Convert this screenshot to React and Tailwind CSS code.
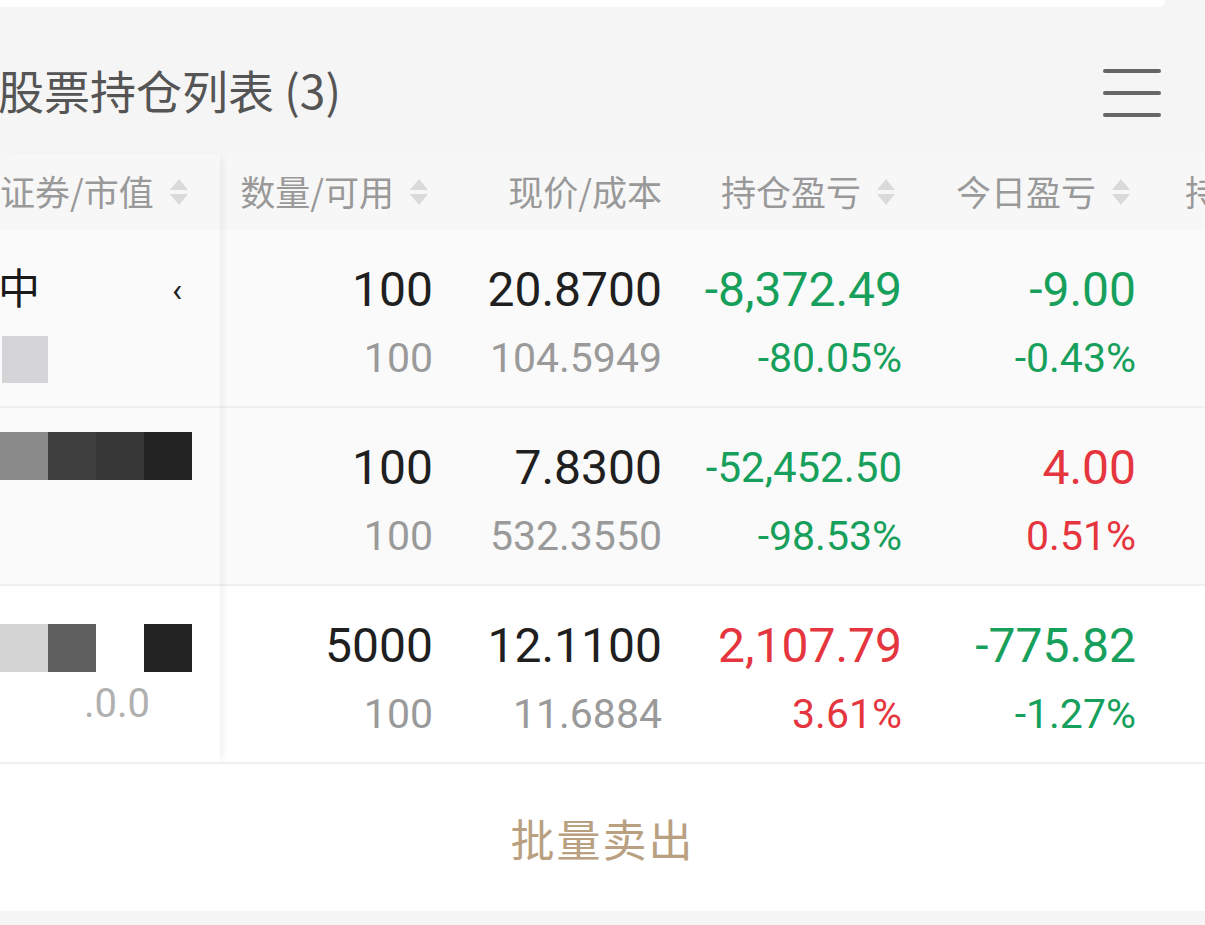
import React from 'react';

const green = 'text-[#17a05b]';
const red = 'text-[#e5353e]';

const rows = [
  {
    qty: '100', avail: '100', price: '20.8700', cost: '104.5949',
    pnl: '-8,372.49', pnlPct: '-80.05%', pnlUp: false,
    today: '-9.00', todayPct: '-0.43%', todayUp: false,
    bg: 'bg-[#fafafa]',
  },
  {
    qty: '100', avail: '100', price: '7.8300', cost: '532.3550',
    pnl: '-52,452.50', pnlPct: '-98.53%', pnlUp: false, pnlSmall: true,
    today: '4.00', todayPct: '0.51%', todayUp: true,
    bg: 'bg-[#fafafa]',
  },
  {
    qty: '5000', avail: '100', price: '12.1100', cost: '11.6884',
    pnl: '2,107.79', pnlPct: '3.61%', pnlUp: true,
    today: '-775.82', todayPct: '-1.27%', todayUp: false,
    bg: 'bg-white',
  },
];

const SortIcon = () => (
  <svg width="22" height="30" viewBox="0 0 22 30" className="ml-[14px] shrink-0">
    <path d="M11 2 L20 13 L2 13 Z" fill="#dadada" />
    <path d="M2 17 L20 17 L11 28 Z" fill="#dadada" />
  </svg>
);

// first column is masked in the screenshot, so only mosaic blocks remain
const NameCell = ({ index }) => {
  if (index === 0) {
    return (
      <div className="flex flex-col">
        <div className="flex items-center h-[88px] pt-[32px]">
          <span className="ml-[-2px] text-[42px] leading-[56px] text-[#1a1a1a]">中</span>
          <span className="ml-[132px] text-[34px] leading-[56px] text-[#222]">‹</span>
        </div>
        <div className="mt-[18px] ml-[2px] w-[46px] h-[47px] bg-[#d5d5d8]" />
      </div>
    );
  }
  if (index === 1) {
    return (
      <div className="flex mt-[24px]">
        <div className="w-[48px] h-[48px] bg-[#8a8a8a]" />
        <div className="w-[48px] h-[48px] bg-[#404040]" />
        <div className="w-[48px] h-[48px] bg-[#373737]" />
        <div className="w-[48px] h-[48px] bg-[#232323]" />
      </div>
    );
  }
  return (
    <div className="flex flex-col">
      <div className="flex mt-[38px]">
        <div className="w-[48px] h-[48px] bg-[#d4d4d4]" />
        <div className="w-[48px] h-[48px] bg-[#5f5f5f]" />
        <div className="w-[48px] h-[48px] bg-white" />
        <div className="w-[48px] h-[48px] bg-[#232323]" />
      </div>
      <span className="mt-[8px] ml-[84px] text-[40px] leading-[48px] text-[#b0b0b0]">.0.0</span>
    </div>
  );
};

const ValueCell = ({ top, bottom, width, topColor, bottomColor, small }) => (
  <div className={`${width} shrink-0 flex flex-col items-end pt-[32px]`}>
    <span className={`${small ? 'text-[42px]' : 'text-[48px]'} leading-[56px] ${topColor}`}>{top}</span>
    <span className={`mt-[16px] text-[41px] leading-[48px] ${bottomColor}`}>{bottom}</span>
  </div>
);

export default function App() {
  return (
    <div
      className="w-full h-[925px] bg-[#f5f5f5] overflow-hidden flex flex-col"
      style={{ fontFamily: 'Roboto, "Noto Sans CJK SC", sans-serif' }}
    >
      {/* bottom edge of the card above */}
      <div className="h-[7px] mr-[40px] bg-white rounded-br-[20px] shrink-0" />

      {/* title */}
      <div className="h-[146px] pt-[18px] flex items-center justify-between pr-[44px] shrink-0">
        <h2 className="ml-[-2px] text-[46px] text-[#555] font-normal" style={{ fontFamily: '"Noto Sans CJK SC", sans-serif' }}>
          股票持仓列表 (3)
        </h2>
        <div className="flex flex-col gap-[18px] w-[58px] mt-[8px]">
          <div className="h-[4px] rounded-full bg-[#666]" />
          <div className="h-[4px] rounded-full bg-[#666]" />
          <div className="h-[4px] rounded-full bg-[#666]" />
        </div>
      </div>

      {/* table */}
      <div className="flex shrink-0">
        {/* fixed first column */}
        <div className="w-[220px] shrink-0 flex flex-col relative z-10 shadow-[6px_0_8px_-4px_rgba(0,0,0,0.07)]">
          <div className="h-[77px] flex items-center bg-[#f7f7f7] text-[35px] text-[#999]" style={{ fontFamily: '"Noto Sans CJK SC", sans-serif' }}>
            证券/市值
            <SortIcon />
          </div>
          {rows.map((r, i) => (
            <div key={i} className={`h-[178px] border-b-2 border-[#efefef] ${r.bg}`}>
              <NameCell index={i} />
            </div>
          ))}
        </div>

        {/* scrolling columns */}
        <div className="flex-1 flex flex-col overflow-hidden">
          <div className="h-[77px] flex items-center bg-[#f7f7f7] text-[35px] text-[#999] whitespace-nowrap" style={{ fontFamily: '"Noto Sans CJK SC", sans-serif' }}>
            <div className="w-[213px] shrink-0 flex items-center justify-end pr-[3px]">数量/可用<SortIcon /></div>
            <div className="w-[229px] shrink-0 flex items-center justify-end">现价/成本</div>
            <div className="w-[240px] shrink-0 flex items-center justify-end pr-[5px]">持仓盈亏<SortIcon /></div>
            <div className="w-[234px] shrink-0 flex items-center justify-end pr-[4px]">今日盈亏<SortIcon /></div>
            <div className="shrink-0 pl-[49px]">持仓占比</div>
          </div>
          {rows.map((r, i) => (
            <div key={i} className={`h-[178px] flex border-b-2 border-[#efefef] ${r.bg}`}>
              <ValueCell width="w-[213px]" top={r.qty} bottom={r.avail} topColor="text-[#1f1f1f]" bottomColor="text-[#9a9a9a]" />
              <ValueCell width="w-[229px]" top={r.price} bottom={r.cost} topColor="text-[#1f1f1f]" bottomColor="text-[#9a9a9a]" />
              <ValueCell width="w-[240px]" top={r.pnl} bottom={r.pnlPct} small={r.pnlSmall} topColor={r.pnlUp ? red : green} bottomColor={r.pnlUp ? red : green} />
              <ValueCell width="w-[234px]" top={r.today} bottom={r.todayPct} topColor={r.todayUp ? red : green} bottomColor={r.todayUp ? red : green} />
            </div>
          ))}
        </div>
      </div>

      {/* batch sell */}
      <div className="h-[147px] shrink-0 bg-white flex items-center justify-center">
        <button className="text-[44px] text-[#b8a080] tracking-[2px]" style={{ fontFamily: '"Noto Sans CJK SC", sans-serif' }}>
          批量卖出
        </button>
      </div>
    </div>
  );
}
